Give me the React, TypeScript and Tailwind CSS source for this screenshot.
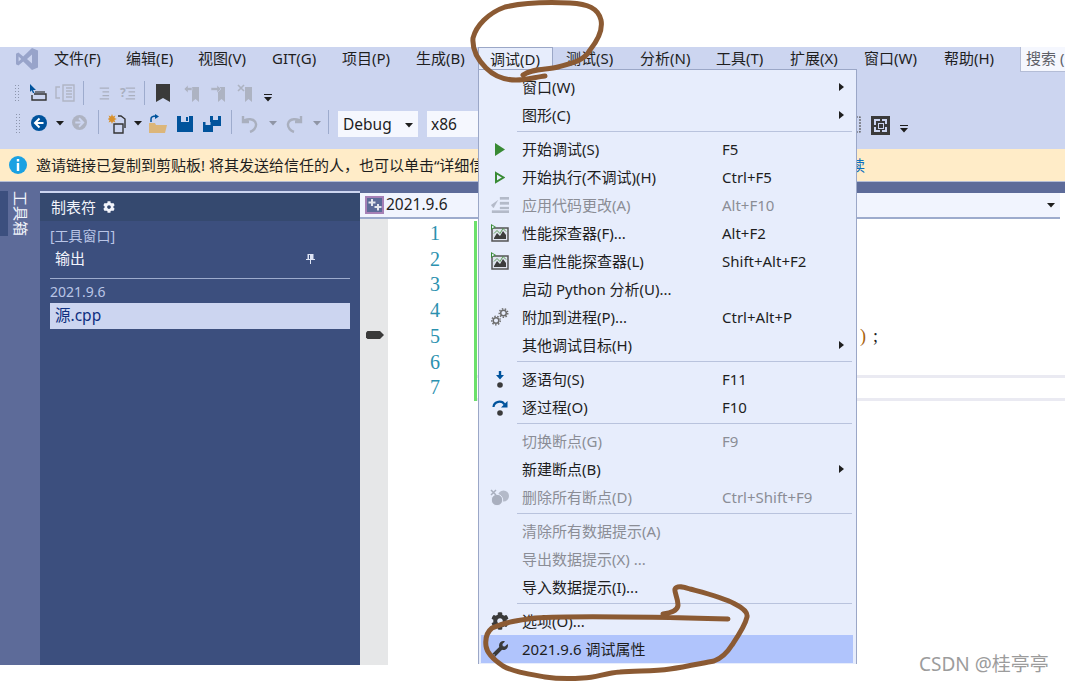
import { FaCog, FaWrench } from 'react-icons/fa'

const uiFont = "font-['Noto_Sans','Noto_Sans_CJK_SC',sans-serif]"

const menuBar = [
  ['文件(F)', 'w-[72px]'],
  ['编辑(E)', 'w-[72px]'],
  ['视图(V)', 'w-[74px]'],
  ['GIT(G)', 'w-[70px]'],
  ['项目(P)', 'w-[74px]'],
  ['生成(B)', 'w-[62px]'],
]

const menuBarRight = [
  ['测试(S)', 'w-[74px]'],
  ['分析(N)', 'w-[76px]'],
  ['工具(T)', 'w-[74px]'],
  ['扩展(X)', 'w-[74px]'],
  ['窗口(W)', 'w-[80px]'],
  ['帮助(H)', 'w-[76px]'],
]

function Grip({ h = 'h-[22px]' }: { h?: string }) {
  return <div className={`w-[6px] ${h} bg-[radial-gradient(#8d96ad_0.8px,transparent_1px)] bg-[length:3px_3px]`} />
}

function Sep() {
  return <div className="w-px h-[24px] bg-[#9dabcd]" />
}

function Caret({ gray }: { gray?: boolean }) {
  return (
    <svg width="8" height="5" viewBox="0 0 8 5">
      <path d="M0 0h8L4 4.500z" fill={gray ? '#8f95a5' : '#1e1e1e'} />
    </svg>
  )
}

function Overflow() {
  return (
    <svg width="8" height="8" viewBox="0 0 8 8">
      <path d="M0 0h8v1H0zM0 3h8L4 7.500z" fill="#1e1e1e" />
    </svg>
  )
}

function VsLogo() {
  return (
    <svg width="24" height="24" viewBox="0 0 24 24">
      <path
        fillRule="evenodd"
        d="M17 1l6 2.600v16.800L17 23 8.200 14.600 3.400 18.400 1 17.200V6.800l2.400-1.200 4.800 3.800zM17 7.600L12 12l5 4.400zM3.600 9.400v5.200L6.200 12z"
        fill="#98a4ca"
      />
    </svg>
  )
}

function Lines({ color = '#a9afbe' }: { color?: string }) {
  return (
    <svg width="15" height="16" viewBox="0 0 16 16">
      <path d="M5 2h10v1.500H5zM8 6h7v1.500H8zM8 10h7v1.500H8zM5 13.500h10V15H5z" fill={color} />
    </svg>
  )
}

function RowOne() {
  return (
    <div className="h-[40px] flex items-center pl-[14px] pt-[5px]">
      <Grip h="h-[18px]" />
      <svg className="ml-[9px]" width="18" height="18" viewBox="0 0 18 18">
        <path d="M1 0l6 6H4l1.500 3H4L2.500 6.200 1 8z" fill="#00539c" />
        <path d="M5 10h12v6H3v-5" fill="none" stroke="#333" strokeWidth="1.400" />
        <path d="M6 8h10" stroke="#333" strokeWidth="1.200" />
      </svg>
      <svg className="ml-[8px]" width="20" height="18" viewBox="0 0 20 18" fill="none" stroke="#b0b5c4" strokeWidth="1.400">
        <path d="M5 3H1v11h4M8 1h11v16H8zM11 4h6M11 7h6M11 10h6M11 13h6" />
      </svg>
      <div className="ml-[8px]">
        <Sep />
      </div>
      <div className="ml-[11px]">
        <Lines />
      </div>
      <div className="ml-[10px] flex items-center">
        <span className="text-[12px] leading-none text-[#a9afbe] -mr-[5px] font-bold">?</span>
        <Lines />
      </div>
      <div className="ml-[8px]">
        <Sep />
      </div>
      <svg className="ml-[10px]" width="16" height="18" viewBox="0 0 16 18">
        <path d="M1 0h14v18l-7-4-7 4z" fill="#3a3a3a" />
      </svg>
      <svg className="ml-[13px]" width="16" height="18" viewBox="0 0 16 18" fill="#adb3c2">
        <path d="M8 3h7v15l-3.500-3L8 18z" />
        <path d="M0 5l4-4v2.500h4v3H4V9z" stroke="#ccd5f0" strokeWidth=".6" />
      </svg>
      <svg className="ml-[10px]" width="17" height="18" viewBox="0 0 17 18" fill="#adb3c2">
        <path d="M8 3h7v15l-3.500-3L8 18z" />
        <path d="M11 5L7 1v2.500H1v3h6V9z" stroke="#ccd5f0" strokeWidth=".6" />
      </svg>
      <svg className="ml-[10px]" width="17" height="18" viewBox="0 0 17 18" fill="#adb3c2">
        <path d="M8 3h7v15l-3.500-3L8 18z" />
        <path d="M1 1l6 6M7 1L1 7" stroke="#adb3c2" strokeWidth="1.600" />
      </svg>
      <div className="ml-[10px] mt-[11px]">
        <Overflow />
      </div>
    </div>
  )
}

function RowTwo() {
  return (
    <div className="h-[39px] flex items-start pl-[15px]">
      <div className="mt-[3px]">
        <Grip />
      </div>
      <svg className="ml-[10px] mt-[5px]" width="16" height="16" viewBox="0 0 16 16">
        <circle cx="8" cy="8" r="8" fill="#00539c" />
        <path d="M8.500 3.500L4 8l4.500 4.500M4.500 8H12.500" fill="none" stroke="#fff" strokeWidth="2" />
      </svg>
      <div className="ml-[9px] mt-[11px]">
        <Caret />
      </div>
      <svg className="ml-[8px] mt-[5px]" width="15" height="15" viewBox="0 0 16 16">
        <circle cx="8" cy="8" r="8" fill="#aeb3c2" />
        <path d="M7.500 3.500L12 8l-4.500 4.500M11.500 8H3.500" fill="none" stroke="#ccd5f0" strokeWidth="2" />
      </svg>
      <div className="ml-[11px]">
        <Sep />
      </div>
      <svg className="ml-[9px] mt-[4px]" width="19" height="20" viewBox="0 0 19 20">
        <path d="M4 0l1 2.400L7.400 1.500 6.400 4l2.400 1-2.400 1 1 2.400L5 7.500 4 10 3 7.500.6 8.400 1.600 6-.8 5l2.400-1-1-2.500L3 2.400z" fill="#d9912c" />
        <path d="M10 2h3l4 3v9" fill="none" stroke="#333" strokeWidth="1.400" />
        <path d="M6 10h9v9H6z" fill="none" stroke="#333" strokeWidth="1.400" />
      </svg>
      <div className="ml-[7px] mt-[11px]">
        <Caret />
      </div>
      <svg className="ml-[6px] mt-[4px]" width="20" height="20" viewBox="0 0 20 20">
        <path d="M1 9h6l1 2h11l-2 8H1z" fill="#dcb67a" />
        <path d="M3 8V5c0-2 2-3 5-3" fill="none" stroke="#00539c" strokeWidth="1.500" />
        <path d="M7 0l4 2.500L7 5z" fill="#00539c" />
      </svg>
      <svg className="ml-[9px] mt-[6px]" width="16" height="16" viewBox="0 0 16 16">
        <path d="M0 0h16v16H0z" fill="#00539c" />
        <path d="M4 0h8v6H4z" fill="#ccd5f0" />
        <path d="M9 1h2v4H9z" fill="#00539c" />
      </svg>
      <svg className="ml-[10px] mt-[6px]" width="18" height="16" viewBox="0 0 18 16">
        <path d="M7 0h11v10H7z" fill="#00539c" />
        <path d="M10 0h5v4h-5z" fill="#ccd5f0" />
        <path d="M0 6h10v10H0z" fill="#00539c" />
        <path d="M2.500 6h5v3h-5z" fill="#ccd5f0" />
      </svg>
      <div className="ml-[10px]">
        <Sep />
      </div>
      <svg className="ml-[9px] mt-[5px]" width="17" height="18" viewBox="0 0 17 18" fill="none" stroke="#a9afbe" strokeWidth="2.400">
        <path d="M2 1v6h6M2 7c3-4 12-4 13 2 .5 4-3 7-6 8" />
      </svg>
      <div className="ml-[11px] mt-[11px]">
        <Caret gray />
      </div>
      <svg className="ml-[9px] mt-[5px]" width="17" height="18" viewBox="0 0 17 18" fill="none" stroke="#a9afbe" strokeWidth="2.400">
        <path d="M15 1v6H9M15 7c-3-4-12-4-13 2-.5 4 3 7 6 8" />
      </svg>
      <div className="ml-[10px] mt-[11px]">
        <Caret gray />
      </div>
      <div className="ml-[7px]">
        <Sep />
      </div>
      <div className="ml-[9px] w-[80px] h-[26px] mt-px bg-[#f5f7fe] flex items-center pl-[5px] pt-[2px] text-[15.5px] text-[#1e1e1e]">
        <span className="flex-1">Debug</span>
        <span className="mr-[5px]">
          <Caret />
        </span>
      </div>
      <div className="ml-[9px] w-[70px] h-[26px] mt-px bg-[#f5f7fe] flex items-center pl-[4px] pt-[2px] text-[15.5px] text-[#1e1e1e]">x86</div>
      <svg className="ml-[346px] mt-[6px]" width="18" height="17" viewBox="0 0 18 17" fill="none" stroke="#555" strokeWidth="1.200" strokeDasharray="2 1">
        <path d="M1 1h16v15H1z" />
      </svg>
      <svg className="ml-[10px] mt-[6px]" width="19" height="19" viewBox="0 0 19 19">
        <path d="M0 0h19v19H0z" fill="#3a3a3a" />
        <path d="M3 3h6v2H5v4H3zM11 3h5v5h-2V5h-3zM16 11v5h-5v-2h3v-3zM3 11h2v3h4v2H3z" fill="#ccd5f0" />
        <path d="M7 7h6v6H7z" fill="#ccd5f0" />
        <path d="M8 8h4v4H8z" fill="#3a3a3a" />
      </svg>
      <div className="ml-[10px] mt-[15px]">
        <Overflow />
      </div>
    </div>
  )
}

type Item = {
  label: string
  keys?: string
  icon?: React.ReactNode
  off?: boolean
  sub?: boolean
  hot?: boolean
}

const Play = (
  <svg width="10" height="13" viewBox="0 0 10 13">
    <path d="M0 0l10 6.500L0 13z" fill="#388a34" />
  </svg>
)

const PlayOutline = (
  <svg width="10" height="13" viewBox="0 0 10 13">
    <path d="M1 2l7.500 4.500L1 11z" fill="none" stroke="#388a34" strokeWidth="2" />
  </svg>
)

const ApplyCode = (
  <svg width="18" height="16" viewBox="0 0 18 16">
    <path d="M0 8l2.500 3L7 3M9 0h9v2.500H9zM9 5h9v2.500H9zM9 10h9v2H9zM1 13.500h17V16H1z" fill="#b4bac9" stroke="#b4bac9" strokeWidth=".3" />
  </svg>
)

const Chart = (
  <svg width="18" height="18" viewBox="0 0 18 18">
    <path d="M1 4h16v13H1z" fill="#dfe3ee" stroke="#555" strokeWidth="1.500" />
    <path d="M3 14l3-5 3 3 3-5 3 4v4H3z" fill="#3c3c3c" />
    <path d="M3 9.500l3-3 3 3 3-5 3 3" fill="none" stroke="#388a34" strokeWidth=".8" />
    <path d="M0 0l5 3-5 3z" fill="#388a34" />
    <path d="M1 1.500l2.500 1.500L1 4.500z" fill="#e7edfc" />
  </svg>
)

const Gears = (
  <svg width="18" height="18" viewBox="0 0 18 18" fill="none" stroke="#6c6c6c">
    <circle cx="12.500" cy="5" r="2.800" strokeWidth="1.500" />
    <circle cx="12.500" cy="5" r="4.300" strokeWidth="1.400" strokeDasharray="1.500 1.500" />
    <circle cx="5" cy="12.500" r="2.800" strokeWidth="1.500" />
    <circle cx="5" cy="12.500" r="4.300" strokeWidth="1.400" strokeDasharray="1.500 1.500" />
  </svg>
)

const StepInto = (
  <svg width="10" height="17" viewBox="0 0 10 17">
    <path d="M3.800 0h2.400v4H9L5 8.500 1 4h2.800z" fill="#00539c" />
    <circle cx="5" cy="14" r="2.800" fill="#3a3a3a" />
  </svg>
)

const StepOver = (
  <svg width="16" height="17" viewBox="0 0 16 17">
    <path d="M1.500 8C2 2 10 1 12.500 5.500" fill="none" stroke="#00539c" strokeWidth="2.200" />
    <path d="M15.500 2v6.500H9z" fill="#00539c" />
    <circle cx="8" cy="14" r="2.800" fill="#3a3a3a" />
  </svg>
)

const DeleteBreak = (
  <svg width="19" height="17" viewBox="0 0 19 17">
    <circle cx="13.500" cy="7" r="5.500" fill="#b4bac9" />
    <circle cx="7" cy="11" r="5.700" fill="#a9afbe" stroke="#e7edfc" />
    <path d="M1 1l5 5M6 1L1 6" stroke="#a9afbe" strokeWidth="1.500" />
  </svg>
)

const debugMenu: (Item | 'sep')[] = [
  { label: '窗口(W)', sub: true },
  { label: '图形(C)', sub: true },
  'sep',
  { label: '开始调试(S)', keys: 'F5', icon: Play },
  { label: '开始执行(不调试)(H)', keys: 'Ctrl+F5', icon: PlayOutline },
  { label: '应用代码更改(A)', keys: 'Alt+F10', icon: ApplyCode, off: true },
  { label: '性能探查器(F)...', keys: 'Alt+F2', icon: Chart },
  { label: '重启性能探查器(L)', keys: 'Shift+Alt+F2', icon: Chart },
  { label: '启动 Python 分析(U)...' },
  { label: '附加到进程(P)...', keys: 'Ctrl+Alt+P', icon: Gears },
  { label: '其他调试目标(H)', sub: true },
  'sep',
  { label: '逐语句(S)', keys: 'F11', icon: StepInto },
  { label: '逐过程(O)', keys: 'F10', icon: StepOver },
  'sep',
  { label: '切换断点(G)', keys: 'F9', off: true },
  { label: '新建断点(B)', sub: true },
  { label: '删除所有断点(D)', keys: 'Ctrl+Shift+F9', icon: DeleteBreak, off: true },
  'sep',
  { label: '清除所有数据提示(A)', off: true },
  { label: '导出数据提示(X) ...', off: true },
  { label: '导入数据提示(I)...' },
  'sep',
  { label: '选项(O)...', icon: <FaCog className="text-[18px] text-[#3a3a3a]" /> },
  { label: '2021.9.6 调试属性', icon: <FaWrench className="text-[16px] text-[#3a3a3a]" />, hot: true },
]

function DebugMenu() {
  return (
    <div className={`absolute left-[478px] top-[69px] w-[379px] h-[595px] bg-[#e7edfc] border-x border-t border-[#9ba7c7] pt-[3px] pl-[2px] pr-[3px] text-[15px] ${uiFont}`}>
      {debugMenu.map((item, i) =>
        item === 'sep' ? (
          <div key={i} className="h-[6px] pt-[2px] pl-[36px] pr-[1px]">
            <div className="h-px bg-[#b9c3dd]" />
          </div>
        ) : (
          <div
            key={i}
            className={`h-[28px] flex items-center ${item.hot ? 'bg-[#b0c4fc]' : ''} ${item.off ? 'text-[#8b8d96]' : 'text-[#1e1e1e]'}`}
          >
            <div className="w-[41px] flex justify-center shrink-0 pr-[4px]">{item.icon}</div>
            <div className="w-[200px] shrink-0 whitespace-nowrap">{item.label}</div>
            <div className="flex-1 whitespace-nowrap">{item.keys}</div>
            {item.sub && (
              <svg className="mr-[9px]" width="5" height="8" viewBox="0 0 5 8">
                <path d="M0 0l5 4-5 4z" fill="#1e1e1e" />
              </svg>
            )}
          </div>
        ),
      )}
    </div>
  )
}

function Sidebar() {
  return (
    <div className="w-[320px] mt-[9px] border-t-2 border-[#ccd5f0] bg-[#3c4f7e] text-[14px]">
      <div className="h-[28px] bg-[#35496f] pl-[11px] flex items-center gap-[7px] text-[15px] text-[#f2f4fb]">
        <span>制表符</span>
        <FaCog className="text-[12px]" />
      </div>
      <div className="px-[10px] pt-[7px]">
        <div className="h-[18px] leading-[16px] text-[#b9c5e6]">[工具窗口]</div>
        <div className="h-[26px] mt-[1px] flex items-center justify-between pl-[5px] pr-[35px] pb-[4px] text-[15px] text-[#f2f4fb]">
          <span>输出</span>
          <svg className="mt-[2px]" width="9" height="10" viewBox="0 0 9 10">
            <path d="M1.500 0h6v5H9v1H5v4H4V6H0V5h1.500zM3 1v4h1V1z" fill="#dfe5f5" />
          </svg>
        </div>
        <div className="h-px mt-[5px] bg-[#9dabcd]" />
        <div className="h-[24px] leading-[26px] text-[#b9c5e6]">2021.9.6</div>
        <div className="h-[26px] leading-[24px] pl-[5px] text-[15.5px] bg-[#ccd5f0] text-[#0e2f80]">源.cpp</div>
      </div>
    </div>
  )
}

function Editor() {
  return (
    <div className="flex-1 mt-[11px] flex flex-col bg-white">
      <div className="h-[26px] bg-[#f1f4fe] border-b-2 border-[#9dabcd] flex items-center pl-[5px] pr-[5px] text-[#1e1e1e] mr-[5px]">
        <svg className="shrink-0" width="19" height="18" viewBox="0 0 19 18">
          <path d="M0 0h19v18H0z" fill="#68217a" opacity=".55" />
          <path d="M2 2h15v14H2z" fill="#5d6b99" />
          <path d="M6 3v2.500H3.500v2H6V10h2V7.500h2.500v-2H8V3zM12 8v2H9.500v2H12v2.500h2V12h2.500v-2H14V8z" fill="#e4e6ee" />
        </svg>
        <span className="ml-[2px] flex-1 text-[15.5px]">2021.9.6</span>
        <Caret />
      </div>
      <div className="flex-1 flex">
        <div className="w-[28px] bg-[#e6e7e8] flex flex-col">
          <svg className="ml-[6px] mt-[112px]" width="18" height="8" viewBox="0 0 18 8">
            <path d="M1.500 0H14l4 4-4 4H1.500L0 6.500v-5z" fill="#3a3a3a" />
          </svg>
        </div>
        <div className="w-[86px] pt-[2px] pr-[34px] text-right font-['Liberation_Serif',serif] text-[20px] leading-[25.7px] text-[#2b91af]">
          {[1, 2, 3, 4, 5, 6, 7].map((n) => (
            <div key={n}>{n}</div>
          ))}
        </div>
        <div className="flex-1">
          <div className="border-l-[3px] border-[#6be06b] h-[179.600px] mt-[2px] font-['Liberation_Serif',serif] text-[18px] leading-[25.700px] text-[#1e1e1e]">
            <div className="h-[25.700px]" />
            <div className="h-[25.700px]" />
            <div className="h-[25.700px]" />
            <div className="h-[25.700px]" />
            <div className="h-[25.700px] pl-[383px] whitespace-nowrap">
              <span className="text-[#a8620c]">)</span>
              <span className="ml-[7px]">;</span>
            </div>
            <div className="h-[25.700px]" />
            <div className="h-[25.700px] border-y-[3px] border-[#eaeaf2]" />
          </div>
        </div>
      </div>
    </div>
  )
}

function Strokes() {
  return (
    <svg className="absolute inset-0 pointer-events-none" width="1065" height="682" viewBox="0 0 1065 682" fill="none" stroke="#8b5a33" strokeWidth="5" strokeLinecap="round" strokeLinejoin="round">
      <path d="M523 75C532 68 548 70 558 67 572 63 584 61 590 50 598 40 603 30 601 20 598 8 588 4 570 3 548 2 522 3 505 7 488 13 476 26 473 38 472 50 478 60 486 68 494 76 505 80 516 80 526 80 536 77 545 76" />
      <path d="M663 614C670 613 678 611 678 605 678 598 674 592 675 589 677 585 684 587 690 589 705 593 722 597 735 604 743 608 748 612 747 617 745 626 738 636 732 645 727 653 722 658 714 661 698 664 684 667 670 669 652 672 635 670 620 672 605 673 596 678 583 678 570 679 558 679 545 677 528 674 514 672 503 666 494 660 487 654 486 646 485 638 487 632 492 628 505 622 520 620 535 618 570 616 650 617 728 619" />
    </svg>
  )
}

export default function App() {
  return (
    <div className={`relative w-[1065px] h-[682px] overflow-hidden bg-white ${uiFont}`}>
      <div className="h-[47px]" />
      <div className="h-[23px] bg-[#ccd5f0] flex text-[15px] text-[#1e1e1e] relative">
        <div className="w-[54px] pl-[15px] flex items-center shrink-0">
          <VsLogo />
        </div>
        {menuBar.map(([label, w]) => (
          <div key={label} className={`${w} leading-[23px] whitespace-nowrap shrink-0`}>
            {label}
          </div>
        ))}
        <div className="w-[75px] h-[23px] shrink-0 bg-[#e7edfc] border-x border-t border-[#9ba7c7] pl-[11px] leading-[22px] whitespace-nowrap">调试(D)</div>
        <div className="w-[13px] shrink-0" />
        {menuBarRight.map(([label, w]) => (
          <div key={label} className={`${w} leading-[23px] whitespace-nowrap shrink-0`}>
            {label}
          </div>
        ))}
        <div className="flex-1 h-[25px] bg-[#f5f7fe] border-l border-b border-[#b4bdd6] pl-[5px] leading-[23px] text-[#5e6068] whitespace-nowrap">搜索 (</div>
      </div>
      <div className="h-[79px] bg-[#ccd5f0]">
        <RowOne />
        <RowTwo />
      </div>
      <div className="h-[33px] bg-[#ffecc8] border-b border-[#b4bdd6] flex items-center pl-[9px] text-[15px] text-[#1e1e1e]">
        <svg width="18" height="18" viewBox="0 0 18 18" className="shrink-0">
          <circle cx="9" cy="9" r="9" fill="#1ba1e2" />
          <path d="M7.800 3h2.400v2.400H7.800zM7.800 7h2.400v8H7.800z" fill="#fff" />
        </svg>
        <div className="ml-[9px] w-[799px] shrink-0 whitespace-nowrap">邀请链接已复制到剪贴板! 将其发送给信任的人，也可以单击“详细信息”</div>
        <div className="text-[#0e70c0] whitespace-nowrap">阅读</div>
      </div>
      <div className="h-[483px] bg-[#5d6b99] flex">
        <div className="w-[40px] pt-[9px] flex items-start">
          <div className="w-[8px] h-[45px] bg-[#3c4f7e]" />
          <div className="ml-[5px] h-[45px] text-[15px] leading-[16px] text-[#f2f4fb] [writing-mode:vertical-rl] [text-orientation:sideways] whitespace-nowrap">工具箱</div>
        </div>
        <Sidebar />
        <Editor />
      </div>
      <DebugMenu />
      <Strokes />
      <div className="absolute left-[919px] top-[652px] text-[19px] leading-[24px] text-[#9c9c9c] whitespace-nowrap">CSDN @桂亭亭</div>
    </div>
  )
}
